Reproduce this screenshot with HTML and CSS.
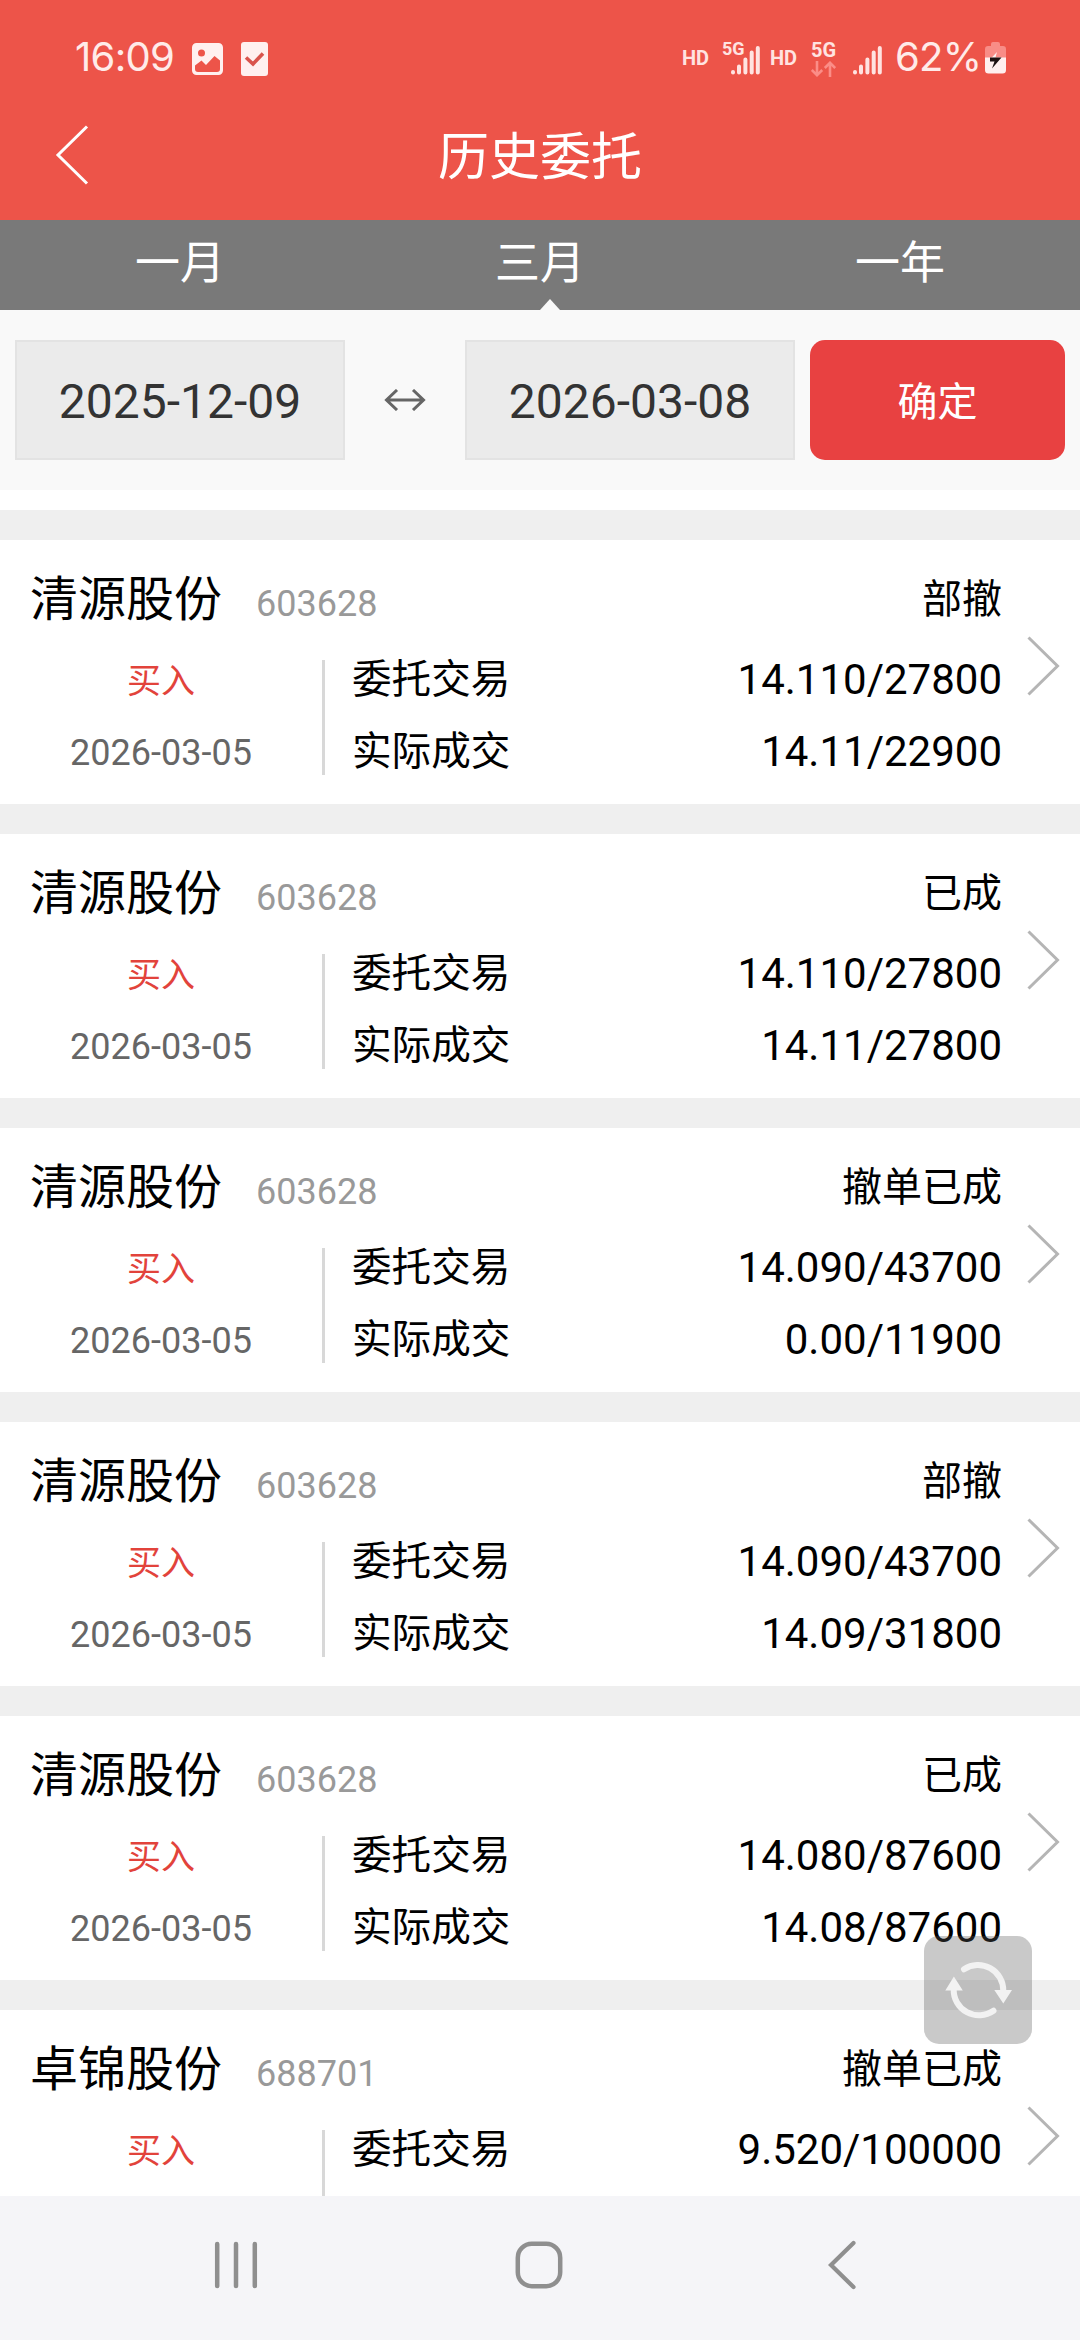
FILE: index.html
```html
<!DOCTYPE html>
<html lang="zh-CN">
<head>
  <meta charset="UTF-8">
  <meta name="viewport" content="width=device-width, initial-scale=1.0">
  <title>历史委托</title>
  <link rel="stylesheet" href="styles.css">
</head>
<body>
  <svg class="symbols">
    <symbol id="icon-signal" viewBox="0 0 30 30">
      <path d="M3 27.5v-.5M9 27.5v-6M15.4 27.5V14.5M21.7 27.5V7.5M27.8 27.5V3" stroke="currentColor" stroke-width="4" stroke-linecap="round"/>
    </symbol>
    <symbol id="icon-next" viewBox="0 0 34 60">
      <path d="M1.5 1.5L30.5 30 1.5 58.500" fill="none" stroke="#b5b5b5" stroke-width="3"/>
    </symbol>
  </svg>

  <div class="page">
    <header class="header">
      <!-- phone status bar -->
      <div class="status-bar">
        <span class="clock">16:09</span>
        <svg class="icon-photo" viewBox="0 0 31 32">
          <path fill-rule="evenodd" fill="currentColor" d="M4.500 0h22a4.500 4.500 0 0 1 4.500 4.500v23a4.500 4.500 0 0 1-4.500 4.500h-22a4.500 4.500 0 0 1-4.500-4.500v-23a4.500 4.500 0 0 1 4.500-4.500zM9.500 6.500a3.500 3.500 0 1 0 0 7 3.500 3.500 0 0 0 0-7zM3 22.500V26a3 3 0 0 0 3 3h19a3 3 0 0 0 3-3v-8.500L22.500 13 14 22l-4.500-4.500z"/>
        </svg>
        <svg class="icon-task" viewBox="0 0 27 34">
          <rect width="27" height="34" rx="3" fill="currentColor"/>
          <path d="M5 15.500l7 6.500 10-10.500" fill="none" stroke="#d9544c" stroke-width="3.600"/>
        </svg>
        <div class="status-right">
          <span class="hd">HD</span>
          <span class="net-small">5G</span>
          <svg class="signal signal-one"><use href="#icon-signal"/></svg>
          <span class="hd hd-two">HD</span>
          <div class="net">
            <span>5G</span>
            <svg class="icon-data" viewBox="0 0 25 16">
              <path d="M6 0v14M.8 9L6 14.200 11.200 9M19 16V2M13.800 7L19 1.800 24.200 7" fill="none" stroke="#fb8d87" stroke-width="2.600"/>
            </svg>
          </div>
          <svg class="signal signal-two"><use href="#icon-signal"/></svg>
          <span class="battery-level">62%</span>
          <svg class="icon-battery" viewBox="0 0 21 32">
            <path d="M6 4V2a2 2 0 0 1 2-2h5a2 2 0 0 1 2 2v2h3a3 3 0 0 1 3 3v9H0V7a3 3 0 0 1 3-3z" fill="#f88d87"/>
            <path d="M0 15.500h21V28a3.500 3.500 0 0 1-3.500 3.500h-14A3.500 3.500 0 0 1 0 28z" fill="#fff0ef"/>
            <path d="M12 10L5 17.500h5z" fill="#fff0ef"/>
            <path d="M5 15.500h11.500L7 26.500l2.500-7H5z" fill="#1c1212"/>
          </svg>
        </div>
      </div>
      <div class="title-bar">
        <svg class="icon-back" viewBox="0 0 34 60">
          <path d="M32 1.500L3 30l29 28.500" fill="none" stroke="currentColor" stroke-width="3"/>
        </svg>
        <h1>历史委托</h1>
      </div>
    </header>

    <nav class="tabs">
      <a class="tab">一月</a>
      <a class="tab active">三月</a>
      <a class="tab">一年</a>
    </nav>

    <div class="filter">
      <div class="date-input">2025-12-09</div>
      <svg class="icon-range" viewBox="0 0 42 22">
        <path d="M2 11h38M13 1L2.500 11 13 21M29 1l10.500 10L29 21" fill="none" stroke="#666" stroke-width="3"/>
      </svg>
      <div class="date-input">2026-03-08</div>
      <button class="confirm">确定</button>
    </div>

    <main class="order-list">
      <div class="order">
        <div class="order-main">
          <div class="order-head"><span class="name">清源股份</span><span class="code">603628</span><span class="state">部撤</span></div>
          <div class="order-body">
            <div class="order-side"><span class="buy">买入</span><span class="date">2026-03-05</span></div>
            <div class="order-detail">
              <div class="row"><span>委托交易</span><span class="value">14.110/27800</span></div>
              <div class="row"><span>实际成交</span><span class="value">14.11/22900</span></div>
            </div>
          </div>
        </div>
        <svg class="icon-next"><use href="#icon-next"/></svg>
      </div>

      <div class="order">
        <div class="order-main">
          <div class="order-head"><span class="name">清源股份</span><span class="code">603628</span><span class="state">已成</span></div>
          <div class="order-body">
            <div class="order-side"><span class="buy">买入</span><span class="date">2026-03-05</span></div>
            <div class="order-detail">
              <div class="row"><span>委托交易</span><span class="value">14.110/27800</span></div>
              <div class="row"><span>实际成交</span><span class="value">14.11/27800</span></div>
            </div>
          </div>
        </div>
        <svg class="icon-next"><use href="#icon-next"/></svg>
      </div>

      <div class="order">
        <div class="order-main">
          <div class="order-head"><span class="name">清源股份</span><span class="code">603628</span><span class="state">撤单已成</span></div>
          <div class="order-body">
            <div class="order-side"><span class="buy">买入</span><span class="date">2026-03-05</span></div>
            <div class="order-detail">
              <div class="row"><span>委托交易</span><span class="value">14.090/43700</span></div>
              <div class="row"><span>实际成交</span><span class="value">0.00/11900</span></div>
            </div>
          </div>
        </div>
        <svg class="icon-next"><use href="#icon-next"/></svg>
      </div>

      <div class="order">
        <div class="order-main">
          <div class="order-head"><span class="name">清源股份</span><span class="code">603628</span><span class="state">部撤</span></div>
          <div class="order-body">
            <div class="order-side"><span class="buy">买入</span><span class="date">2026-03-05</span></div>
            <div class="order-detail">
              <div class="row"><span>委托交易</span><span class="value">14.090/43700</span></div>
              <div class="row"><span>实际成交</span><span class="value">14.09/31800</span></div>
            </div>
          </div>
        </div>
        <svg class="icon-next"><use href="#icon-next"/></svg>
      </div>

      <div class="order">
        <div class="order-main">
          <div class="order-head"><span class="name">清源股份</span><span class="code">603628</span><span class="state">已成</span></div>
          <div class="order-body">
            <div class="order-side"><span class="buy">买入</span><span class="date">2026-03-05</span></div>
            <div class="order-detail">
              <div class="row"><span>委托交易</span><span class="value">14.080/87600</span></div>
              <div class="row"><span>实际成交</span><span class="value">14.08/87600</span></div>
            </div>
          </div>
        </div>
        <svg class="icon-next"><use href="#icon-next"/></svg>
      </div>

      <!-- cut off by the navigation bar -->
      <div class="order">
        <div class="order-main">
          <div class="order-head"><span class="name">卓锦股份</span><span class="code">688701</span><span class="state">撤单已成</span></div>
          <div class="order-body">
            <div class="order-side"><span class="buy">买入</span></div>
            <div class="order-detail">
              <div class="row"><span>委托交易</span><span class="value">9.520/100000</span></div>
            </div>
          </div>
        </div>
        <svg class="icon-next"><use href="#icon-next"/></svg>
      </div>
    </main>

    <button class="refresh">
      <svg viewBox="0 0 108 108">
        <g fill="none" stroke="#f2f2f2" stroke-width="6" stroke-linecap="round">
          <path d="M40 33.300A25.300 25.300 0 0 1 79.300 55"/>
          <path d="M69.500 74.700A25.300 25.300 0 0 1 29.700 53"/>
        </g>
        <path d="M70.300 54H88l-8.700 13.500zM21.300 54.500h17.500L29.900 40.500z" fill="#f2f2f2"/>
      </svg>
    </button>

    <footer class="nav-bar">
      <svg viewBox="0 0 50 50"><path d="M6.200 4v42M25 4v42M43.800 4v42" stroke="#8f8f8f" stroke-width="4.500" stroke-linecap="round"/></svg>
      <svg viewBox="0 0 50 50"><rect x="3.800" y="3.800" width="42.400" height="42.400" rx="14" fill="none" stroke="#8f8f8f" stroke-width="4.500"/></svg>
      <svg viewBox="0 0 50 50"><path d="M36.500 3L14 25l22.500 22" fill="none" stroke="#8f8f8f" stroke-width="4.200" stroke-linecap="round"/></svg>
    </footer>
  </div>
</body>
</html>
```
FILE: styles.css
```css
* {
  box-sizing: border-box;
}

body {
  margin: 0;
  font-family: Roboto, "Noto Sans CJK SC", sans-serif;
  color: #000;
  background-color: #fff;
}

svg {
  display: block;
  flex: none;
}

.symbols {
  width: 0;
  height: 0;
  position: absolute;
}

.page {
  position: relative;
  display: flex;
  flex-direction: column;
  width: 1080px;
  height: 2340px;
  overflow: hidden;
}

/* header */
.header {
  height: 220px;
  flex: none;
  background-color: #ed5449;
  color: #fff;
}

.status-bar {
  display: flex;
  height: 90px;
  padding: 0 74px 0 75px;
  color: #fff0ef;
}

.clock, .battery-level {
  font-family: Inter, Roboto, sans-serif;
  font-size: 40px;
  line-height: 48px;
  margin-top: 33px;
  letter-spacing: -0.7px;
  color: #ffebe9;
}

.clock {
  width: 117px;
}

.icon-photo {
  width: 31px;
  height: 32px;
  margin-top: 43px;
}

.icon-task {
  width: 27px;
  height: 34px;
  margin: 42px 0 0 18px;
}

.status-right {
  display: flex;
  margin-left: auto;
  color: #ffe3e1;
}

.hd {
  width: 40px;
  margin-top: 47px;
  font-size: 20px;
  line-height: 22px;
  font-weight: 700;
}

.net-small {
  width: 8px;
  margin-top: 38px;
  font-size: 18px;
  line-height: 22px;
  font-weight: 700;
}

.signal {
  width: 30px;
  height: 30px;
  margin-top: 45px;
}

.signal-one {
  margin-right: 10px;
}

.hd-two {
  width: 41px;
}

.net {
  width: 41px;
  margin-top: 39px;
  font-size: 20px;
  line-height: 22px;
  font-weight: 700;
}

.net span {
  display: block;
}

.icon-data {
  width: 25px;
  height: 16px;
}

.signal-two {
  margin-right: 13px;
}

.battery-level {
  width: 90px;
}

.icon-battery {
  width: 21px;
  height: 32px;
  margin-top: 42px;
}

.title-bar {
  display: flex;
  height: 130px;
  padding-left: 55px;
}

.icon-back {
  width: 34px;
  height: 60px;
  margin-top: 35px;
}

.title-bar h1 {
  flex: 1;
  margin: 0;
  padding-right: 89px;
  font-size: 51px;
  line-height: 135px;
  font-weight: 400;
  text-align: center;
}

/* tabs */
.tabs {
  display: flex;
  height: 90px;
  flex: none;
  background-color: #797979;
}

.tab {
  position: relative;
  flex: 1;
  font-size: 45px;
  line-height: 87px;
  color: #fff;
  text-align: center;
}

.tab.active::after {
  content: "";
  position: absolute;
  left: 180px;
  bottom: 0;
  border: 10px solid transparent;
  border-top: 0;
  border-bottom: 11px solid #f9f9f9;
}

/* date filter */
.filter {
  display: flex;
  align-items: center;
  height: 180px;
  flex: none;
  padding: 0 15px;
  background-color: #f9f9f9;
}

.date-input {
  width: 330px;
  height: 120px;
  border: 2px solid #e3e3e3;
  background-color: #ebebeb;
  font-size: 48px;
  line-height: 119px;
  color: #333;
  text-align: center;
}

.icon-range {
  width: 42px;
  height: 22px;
  margin: 0 39px;
}

.confirm {
  width: 255px;
  height: 120px;
  margin-left: 15px;
  padding: 0 0 3px;
  border: none;
  border-radius: 15px;
  background-color: #e84141;
  color: #fff;
  font-family: inherit;
  font-size: 40px;
}

/* orders */
.order-list {
  flex: 1;
  min-height: 0;
  overflow: hidden;
  padding-top: 20px;
}

.order {
  display: flex;
  height: 294px;
  border-top: 30px solid #efefef;
}

.order-main {
  width: 1002px;
}

.order-head {
  display: flex;
  align-items: baseline;
  height: 120px;
  padding-left: 30px;
  line-height: 119px;
}

.name {
  font-size: 48px;
}

.code {
  margin-left: 34px;
  font-size: 36px;
  color: #999;
}

.state {
  align-self: flex-start;
  margin-left: auto;
  font-size: 40px;
}

.order-body {
  display: flex;
  height: 115px;
}

.order-side {
  display: flex;
  flex-direction: column;
  width: 325px;
  border-right: 3px solid #d8d8d8;
  text-align: center;
}

.buy {
  font-size: 34px;
  line-height: 42px;
  color: #e2433b;
}

.date {
  margin-top: 31px;
  font-size: 36px;
  line-height: 40px;
  color: #666;
}

.order-detail {
  flex: 1;
  padding-left: 27px;
}

.row {
  display: flex;
  justify-content: space-between;
  height: 72px;
  font-size: 39.6px;
  line-height: 40px;
}

.value {
  font-size: 42px;
}

.icon-next {
  width: 34px;
  height: 60px;
  margin: 96px 0 0 25px;
}

.refresh {
  position: absolute;
  left: 924px;
  top: 1936px;
  width: 108px;
  height: 108px;
  padding: 0;
  border: none;
  border-radius: 15px;
  background-color: rgba(88, 88, 88, 0.32);
}

/* phone navigation */
.nav-bar {
  display: flex;
  justify-content: space-between;
  height: 144px;
  flex: none;
  padding: 44px 213px 0 211px;
  background-color: #f5f5f8;
}

.nav-bar svg {
  width: 50px;
  height: 50px;
}
```
